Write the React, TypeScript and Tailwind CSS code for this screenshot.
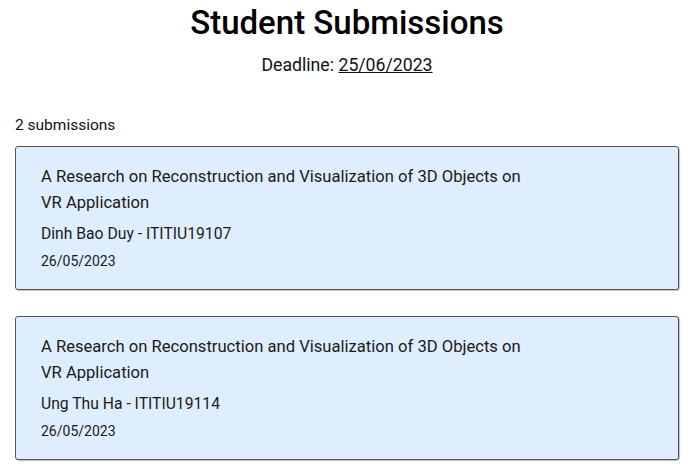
const submissions = [
  {
    id: 1,
    title: "A Research on Reconstruction and Visualization of 3D Objects on VR Application",
    student: "Dinh Bao Duy - ITITIU19107",
    date: "26/05/2023",
  },
  {
    id: 2,
    title: "A Research on Reconstruction and Visualization of 3D Objects on VR Application",
    student: "Ung Thu Ha - ITITIU19114",
    date: "26/05/2023",
  },
];

export default function App() {
  return (
    <div className="min-h-screen bg-white px-[15px] font-['Roboto',sans-serif] text-[#111]">
      <h1 className="pt-[3px] text-center text-[33px] font-medium leading-[40px] text-black">
        Student Submissions
      </h1>
      <p className="mt-[10px] text-center text-[17.7px] leading-[24px]">
        Deadline: <span className="underline">25/06/2023</span>
      </p>

      <p className="mt-[38px] text-[15.5px] leading-[20px]">
        {submissions.length} submissions
      </p>

      <div className="mt-[11px] flex flex-col gap-[26px]">
        {submissions.map((s) => (
          <div
            key={s.id}
            className="h-[144px] rounded-[3px] border border-[#555] bg-[#dfeeff] pl-[25px] pt-[17px] shadow-[1px_1px_1px_rgba(0,0,0,0.25)]"
          >
            <p className="max-w-[500px] text-[16.6px] leading-[26px] text-[#1a1a1a]">{s.title}</p>
            <p className="mt-[6px] text-[15.7px] leading-[24px] text-[#1a1a1a]">{s.student}</p>
            <p className="mt-[4px] text-[14px] leading-[22px] text-[#1a1a1a]">{s.date}</p>
          </div>
        ))}
      </div>
    </div>
  );
}
